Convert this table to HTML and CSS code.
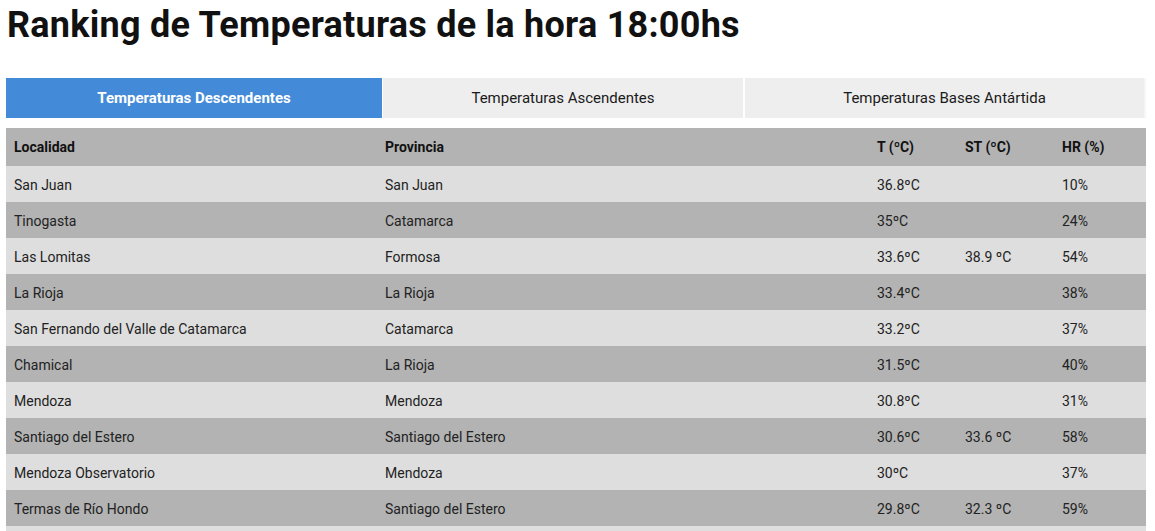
FILE: index.html
```html
<!DOCTYPE html>
<html lang="es">
<head>
<meta charset="utf-8">
<title>Ranking de Temperaturas</title>
<link rel="stylesheet" href="styles.css">
</head>
<body>
<h1 class="title">Ranking de Temperaturas de la hora 18:00hs</h1>
<div class="tabs">
  <div class="tab active">Temperaturas Descendentes</div>
  <div class="tab">Temperaturas Ascendentes</div>
  <div class="tab last">Temperaturas Bases Antártida</div>
</div>
<table class="ranking">
  <colgroup>
    <col class="c-loc"><col class="c-prov"><col class="c-t"><col class="c-st"><col class="c-hr">
  </colgroup>
  <thead>
    <tr><th>Localidad</th><th>Provincia</th><th>T (ºC)</th><th>ST (ºC)</th><th>HR (%)</th></tr>
  </thead>
  <tbody>
    <tr><td>San Juan</td><td>San Juan</td><td>36.8ºC</td><td></td><td>10%</td></tr>
    <tr><td>Tinogasta</td><td>Catamarca</td><td>35ºC</td><td></td><td>24%</td></tr>
    <tr><td>Las Lomitas</td><td>Formosa</td><td>33.6ºC</td><td>38.9 ºC</td><td>54%</td></tr>
    <tr><td>La Rioja</td><td>La Rioja</td><td>33.4ºC</td><td></td><td>38%</td></tr>
    <tr><td>San Fernando del Valle de Catamarca</td><td>Catamarca</td><td>33.2ºC</td><td></td><td>37%</td></tr>
    <tr><td>Chamical</td><td>La Rioja</td><td>31.5ºC</td><td></td><td>40%</td></tr>
    <tr><td>Mendoza</td><td>Mendoza</td><td>30.8ºC</td><td></td><td>31%</td></tr>
    <tr><td>Santiago del Estero</td><td>Santiago del Estero</td><td>30.6ºC</td><td>33.6 ºC</td><td>58%</td></tr>
    <tr><td>Mendoza Observatorio</td><td>Mendoza</td><td>30ºC</td><td></td><td>37%</td></tr>
    <tr><td>Termas de Río Hondo</td><td>Santiago del Estero</td><td>29.8ºC</td><td>32.3 ºC</td><td>59%</td></tr>
    <tr class="tail"><td></td><td></td><td></td><td></td><td></td></tr>
  </tbody>
</table>
</body>
</html>
```
FILE: styles.css
```css
html, body {
  margin: 0;
  padding: 0;
  background: #ffffff;
}
body {
  padding: 0 9px 0 6px;
  font-family: Roboto, "Liberation Sans", Arial, sans-serif;
  color: #1a1a1a;
}
.title {
  margin: 0;
  padding: 4px 0 0 1px;
  font-size: 36px;
  line-height: 42px;
  font-weight: 700;
  color: #111111;
  letter-spacing: 0.25px;
}
.tabs {
  margin-top: 32px;
  display: grid;
  grid-template-columns: 377px 361px 402px;
  width: 1140px;
}
.tab {
  height: 40px;
  display: flex;
  align-items: center;
  justify-content: center;
  background: #eeeeee;
  border-right: 1px solid #ffffff;
  font-size: 15px;
  color: #1a1a1a;
}
.tab.last {
  border-right: 2px solid #f6f6f6;
  margin-left: 1px;
}
.tab.active {
  background: #438bd8;
  color: #ffffff;
  font-weight: 700;
}
.ranking {
  margin-top: 10px;
  width: 1140px;
  border-collapse: collapse;
  table-layout: fixed;
  font-size: 14px;
}
.c-loc { width: 371px; }
.c-prov { width: 492px; }
.c-t { width: 88px; }
.c-st { width: 97px; }
.c-hr { width: 92px; }
.ranking th {
  text-align: left;
  font-weight: 700;
  height: 38px;
  box-sizing: border-box;
  padding: 0 8px;
  background: #b3b3b3;
  color: #111111;
}
.ranking td {
  height: 36px;
  box-sizing: border-box;
  padding: 2px 8px 0;
  color: #222222;
  white-space: nowrap;
}
.ranking tbody tr:nth-child(odd) td {
  background: #dedede;
}
.ranking tbody tr:nth-child(even) td {
  background: #b3b3b3;
}
```
